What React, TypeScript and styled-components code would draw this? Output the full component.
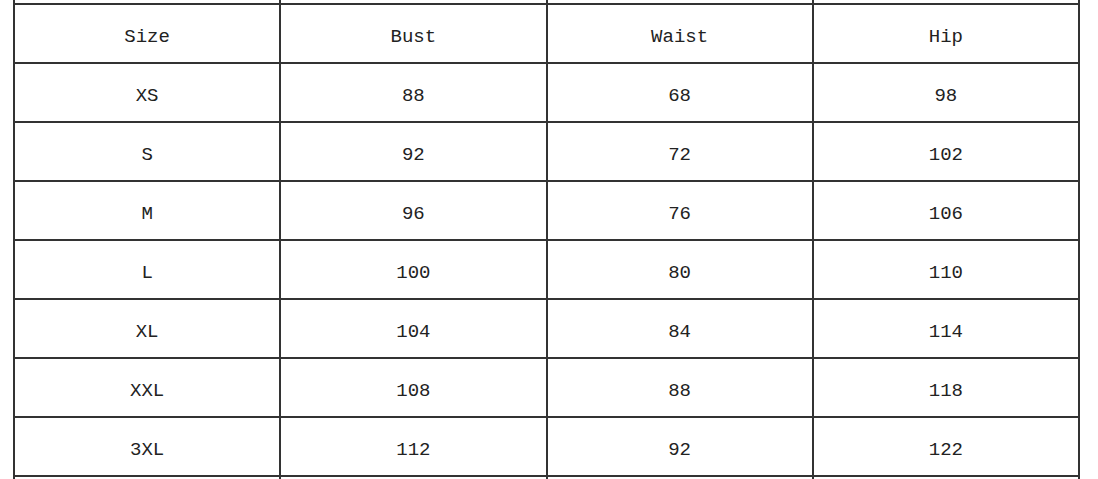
import React from 'react';
import styled, { createGlobalStyle } from 'styled-components';

const GlobalStyle = createGlobalStyle`
    html, body {
        margin: 0;
        padding: 0;
        background: #ffffff;
        overflow: hidden;
    }
`;

const Page = styled.div`
    width: 1098px;
    height: 479px;
    overflow: hidden;
    padding-left: 13px;
    box-sizing: border-box;
`;

const Chart = styled.div`
    display: grid;
    grid-template-columns: repeat(4, 1fr);
    gap: 2px;
    width: 1067px;
    padding: 0 2px;
    box-sizing: border-box;
    background: #333333;
`;

const Cell = styled.div<{ $edge?: boolean }>`
    background: #ffffff;
    height: ${p => (p.$edge ? '3px' : '57px')};
    padding-top: ${p => (p.$edge ? '0' : '6px')};
    box-sizing: border-box;
    display: flex;
    align-items: center;
    justify-content: center;
    font-family: "Liberation Mono", "DejaVu Sans Mono", monospace;
    font-size: 19px;
    color: #222222;
`;

const header = ['Size', 'Bust', 'Waist', 'Hip'];

const rows = [
    ['XS', '88', '68', '98'],
    ['S', '92', '72', '102'],
    ['M', '96', '76', '106'],
    ['L', '100', '80', '110'],
    ['XL', '104', '84', '114'],
    ['XXL', '108', '88', '118'],
    ['3XL', '112', '92', '122'],
];

const SizeChart = () => {
    return (
        <Chart>
            {header.map(h => <Cell key={'top' + h} $edge />)}
            {header.map(h => <Cell key={h}>{h}</Cell>)}
            {rows.map(r => r.map((v, i) => <Cell key={r[0] + i}>{v}</Cell>))}
            {header.map(h => <Cell key={'end' + h} $edge />)}
        </Chart>
    );
};

const App = () => (
    <Page>
        <GlobalStyle />
        <SizeChart />
    </Page>
);

export default App;
